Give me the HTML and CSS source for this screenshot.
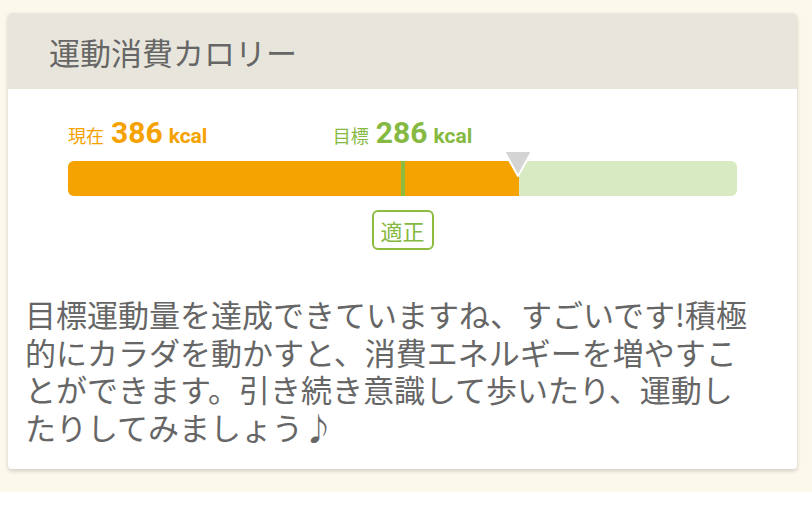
FILE: index.html
```html
<!DOCTYPE html>
<html lang="ja">
<head>
<meta charset="utf-8">
<link rel="stylesheet" href="styles.css">
</head>
<body>
<div class="page">
  <section class="card">
    <header class="card-head">
      <h1 class="card-title">運動消費カロリー</h1>
    </header>
    <div class="card-body">
      <div class="gauge">
        <div class="labels">
          <div class="label current">
            <span class="label-name">現在</span>
            <span class="label-num">386</span>
            <span class="label-unit">kcal</span>
          </div>
          <div class="label target" style="left:50%">
            <span class="label-name">目標</span>
            <span class="label-num">286</span>
            <span class="label-unit">kcal</span>
          </div>
        </div>
        <div class="bar">
          <div class="bar-fill" style="width:67.48%"></div>
          <div class="bar-goal" style="left:50%"></div>
          <svg class="bar-pointer" style="left:67.48%" width="32" height="30" viewBox="0 0 32 30">
            <polygon points="2,2 30,2 16,27" fill="#d4d4d4" stroke="#ffffff" stroke-width="2" stroke-linejoin="round"/>
          </svg>
        </div>
        <div class="status">
          <span class="badge" style="left:50%">適正</span>
        </div>
      </div>
      <p class="message">目標運動量を達成できていますね、すごいです!積極的にカラダを動かすと、消費エネルギーを増やすことができます。引き続き意識して歩いたり、運動したりしてみましょう♪</p>
    </div>
  </section>
</div>
</body>
</html>
```

FILE: styles.css
```css
html, body {
  margin: 0;
  padding: 0;
  background: #ffffff;
}

.page {
  background: #fdf8ec;
  padding: 13px 15px 23px 8px;
  font-family: "Noto Sans CJK JP", sans-serif;
}

.card {
  background: #ffffff;
  border-radius: 4px;
  box-shadow: 0 2px 4px rgba(0, 0, 0, 0.18);
  overflow: hidden;
}

.card-head {
  background: #e8e6dc;
  height: 76px;
  display: flex;
  align-items: center;
  padding: 0 41px;
}

.card-title {
  margin: 0;
  font-size: 31px;
  font-weight: 400;
  color: #666666;
  line-height: 1;
}

.card-body {
  padding: 26px 0 24px;
}

.gauge {
  padding: 0 60px;
}

.labels {
  position: relative;
  height: 34px;
  margin-bottom: 12px;
}

.label {
  display: flex;
  align-items: baseline;
  white-space: nowrap;
  font-family: "Roboto", "Noto Sans CJK JP", sans-serif;
}

.label.target {
  position: absolute;
  top: 0;
  transform: translateX(-50%);
}

.current { color: #f5a200; }
.target { color: #86b941; }

.label-name {
  font-family: "Noto Sans CJK JP", sans-serif;
  font-size: 18px;
  margin-right: 7px;
}

.label-num {
  font-size: 30px;
  font-weight: 700;
  margin-right: 6px;
}

.label-unit {
  font-size: 21px;
  font-weight: 700;
}

.bar {
  position: relative;
  height: 35px;
  background: #d7eac2;
  border-radius: 6px;
}

.bar-fill {
  height: 100%;
  background: #f5a300;
  border-radius: 6px 0 0 6px;
}

.bar-goal {
  position: absolute;
  top: 0;
  bottom: 0;
  width: 4px;
  margin-left: -2px;
  background: #8cbb3f;
}

.bar-pointer {
  position: absolute;
  top: -12px;
  margin-left: -17px;
}

.status {
  position: relative;
  height: 40px;
  margin-top: 14px;
}

.badge {
  position: absolute;
  top: 0;
  transform: translateX(-50%);
  height: 36px;
  padding: 0 7px;
  border: 2px solid #8cbb3f;
  border-radius: 6px;
  color: #86b941;
  font-size: 22px;
  line-height: 36px;
  white-space: nowrap;
}

.message {
  margin: 45px 0 0;
  padding: 0 37px 0 17px;
  font-size: 31px;
  line-height: 37.5px;
  color: #666666;
  font-weight: 400;
}
```
